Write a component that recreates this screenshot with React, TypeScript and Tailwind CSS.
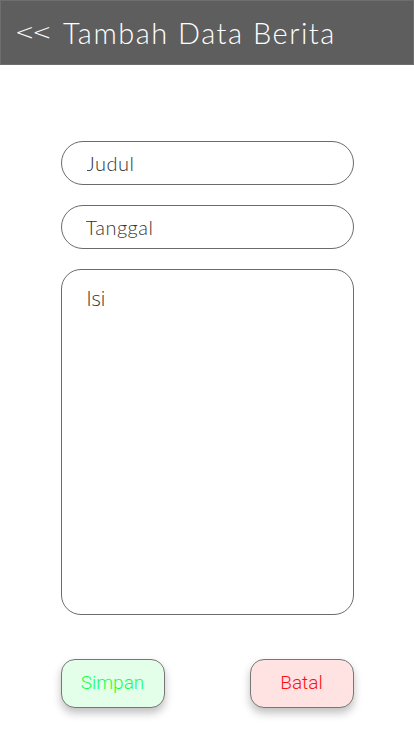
import React from 'react';

const App: React.FC = () => {
  return (
    <div className="w-[414px] h-[736px] bg-white font-['Lato',sans-serif] overflow-hidden">
      <header className="h-[65px] bg-[#5e5e5e] border border-[#6e6e6e] flex items-center px-[14px] text-white">
        <span className="text-[23px] font-['DejaVu_Sans',sans-serif] font-extralight tracking-[-2px] w-[48px] -mt-[1px]">&lt;&lt;</span>
        <h1 className="text-[29px] font-light tracking-[1.5px]">Tambah Data Berita</h1>
      </header>

      <form className="flex flex-col items-center pt-[76px] gap-[20px]">
        <input
          placeholder="Judul"
          className="w-[293px] h-[44px] rounded-full border border-[#6b6b6b] px-[25px] text-[20px] font-light tracking-[0.5px] text-[#333] placeholder:text-[#333] outline-none"
        />
        <input
          placeholder="Tanggal"
          className="w-[293px] h-[44px] rounded-full border border-[#6b6b6b] px-[24px] text-[20px] font-light tracking-[0.5px] text-[#333] placeholder:text-[#333] outline-none"
        />
        <textarea
          placeholder="Isi"
          className="w-[293px] h-[346px] rounded-[20px] border border-[#6b6b6b] px-[25px] pt-[14px] text-[20px] font-['Open_Sans',sans-serif] font-light text-[#333] placeholder:text-[#333] outline-none resize-none"
        />
        <div className="w-[293px] flex justify-between mt-[24px]">
          <button
            type="button"
            className="w-[104px] h-[49px] rounded-[14px] border border-[#777] bg-[#e3ffea] text-[#14ff46] text-[19px] font-['Roboto',sans-serif] font-light shadow-[0_5px_8px_rgba(0,0,0,0.25)]"
          >
            Simpan
          </button>
          <button
            type="button"
            className="w-[104px] h-[49px] rounded-[14px] border border-[#777] bg-[#ffe3e3] text-[#ff1010] text-[19px] font-['Roboto',sans-serif] font-light shadow-[0_5px_8px_rgba(0,0,0,0.25)]"
          >
            Batal
          </button>
        </div>
      </form>
    </div>
  );
};

export default App;
